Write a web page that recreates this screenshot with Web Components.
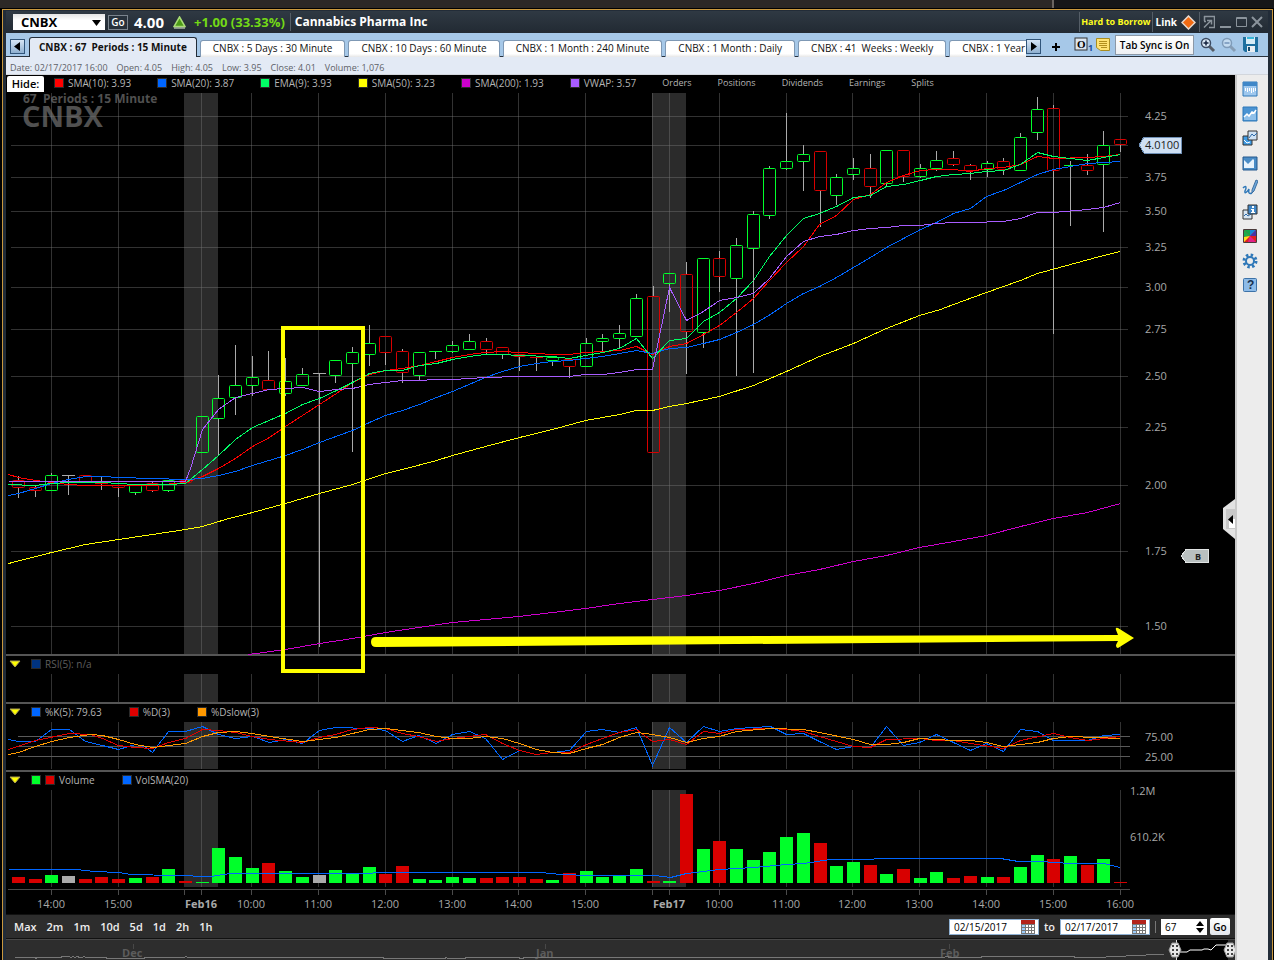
<!DOCTYPE html>
<html lang="en">
<head>
<meta charset="utf-8">
<title>CNBX 4.00 - Cannabics Pharma Inc</title>
<style>
  body {
    margin: 0;
    background: #000;
    font-family: "Open Sans", "Noto Sans", sans-serif;
    font-size: 11px;
  }
</style>
</head>
<body>
<trade-window>
  <title-bar slot="title" symbol="CNBX" price="4.00" change="+1.00 (33.33%)">Cannabics Pharma Inc</title-bar>
  <tab-strip slot="tabs">
    <chart-tab active>CNBX : 67&nbsp; Periods : 15 Minute</chart-tab>
    <chart-tab>CNBX : 5 Days : 30 Minute</chart-tab>
    <chart-tab>CNBX : 10 Days : 60 Minute</chart-tab>
    <chart-tab>CNBX : 1 Month : 240 Minute</chart-tab>
    <chart-tab>CNBX : 1 Month : Daily</chart-tab>
    <chart-tab>CNBX : 41&nbsp; Weeks : Weekly</chart-tab>
    <chart-tab>CNBX : 1 Year</chart-tab>
  </tab-strip>
  <info-bar slot="info">
    <span>Date: 02/17/2017 16:00</span>
    <span>Open: 4.05</span>
    <span>High: 4.05</span>
    <span>Low: 3.95</span>
    <span>Close: 4.01</span>
    <span>Volume: 1,076</span>
  </info-bar>
  <chart-area slot="chart">
    <chart-pane kind="price">
      <legend-item color="#f00">SMA(10): 3.93</legend-item>
      <legend-item color="#06f">SMA(20): 3.87</legend-item>
      <legend-item color="#00ff66">EMA(9): 3.93</legend-item>
      <legend-item color="#ff0">SMA(50): 3.23</legend-item>
      <legend-item color="#c0c">SMA(200): 1.93</legend-item>
      <legend-item color="#a85cff">VWAP: 3.57</legend-item>
      <legend-item>Orders</legend-item>
      <legend-item>Positions</legend-item>
      <legend-item>Dividends</legend-item>
      <legend-item>Earnings</legend-item>
      <legend-item>Splits</legend-item>
    </chart-pane>
    <chart-pane kind="rsi">
      <legend-item color="#003380" dim>RSI(5): n/a</legend-item>
    </chart-pane>
    <chart-pane kind="stochastic">
      <legend-item color="#06f">%K(5): 79.63</legend-item>
      <legend-item color="#d00">%D(3)</legend-item>
      <legend-item color="#f90">%Dslow(3)</legend-item>
    </chart-pane>
    <chart-pane kind="volume">
      <legend-item color="#00ff2a" color2="#d00">Volume</legend-item>
      <legend-item color="#06f">VolSMA(20)</legend-item>
    </chart-pane>
  </chart-area>
  <range-bar slot="range" from="02/15/2017" to="02/17/2017" periods="67"></range-bar>
  <range-overview slot="overview"></range-overview>
  <tool-rail slot="tools"></tool-rail>
</trade-window>

<script>
class TradeWindow extends HTMLElement {
  constructor() {
    super();
    this.attachShadow({mode: 'open'}).innerHTML = `
      <style>
        :host {
          display: block;
          background: #000;
        }
        .desktop {
          display: flex;
          height: 8px;
          background: #2c2826;
          border-bottom: 1px solid #000;
        }
        .desktop i {
          flex: none;
          width: 220px;
          margin-left: auto;
          background: #161618;
          border-left: 2px solid #6a6460;
        }
        .frame {
          border: solid #c9983e;
          border-width: 1px 1px 0;
          margin: 0 1px 0 2px;
        }
        .inner {
          border: solid #222c38;
          border-width: 1px 4px 0 3px;
        }
        .body {
          display: grid;
          grid-template-columns: minmax(0, 1fr) 33px;
        }
        .main {
          min-width: 0;
        }
      </style>
      <div class="desktop"><i></i></div>
      <div class="frame"><div class="inner">
        <slot name="title"></slot>
        <slot name="tabs"></slot>
        <slot name="info"></slot>
        <div class="body">
          <div class="main">
            <slot name="chart"></slot>
            <slot name="range"></slot>
            <slot name="overview"></slot>
          </div>
          <slot name="tools"></slot>
        </div>
      </div></div>
    `;
  }
}
customElements.define('trade-window', TradeWindow);

class TitleBar extends HTMLElement {
  constructor() {
    super();
    this.attachShadow({mode: 'open'}).innerHTML = `
      <style>
        :host {
          display: flex;
          align-items: center;
          height: 22px;
          padding: 0 4px 0 7px;
          color: #fff;
          font-weight: 700;
          font-size: 13px;
          white-space: nowrap;
          background: linear-gradient(#2f3943, #222a33);
        }
        .symbol {
          display: grid;
          width: 92px;
          height: 16px;
          background: linear-gradient(#e4e4e4, #fff 40%);
        }
        .symbol select, .symbol svg {
          grid-area: 1 / 1;
        }
        .symbol svg {
          justify-self: end;
          align-self: center;
          margin-right: 3px;
          pointer-events: none;
        }
        select {
          appearance: none;
          width: 100%;
          height: 16px;
          padding: 0 8px;
          border: 0;
          background: none;
          color: #000;
          font: inherit;
          line-height: 16px;
        }
        .go {
          width: 20px;
          height: 15px;
          margin: 0 6px 0 3px;
          padding: 0;
          border: 1px solid #7b848d;
          background: #27313b;
          color: #fff;
          font: 600 10px/12px "Open Sans", sans-serif;
        }
        .price {
          font-size: 15px;
        }
        .up {
          margin: 0 8px 0 9px;
        }
        .change {
          color: #73d916;
        }
        .name {
          margin-left: 5px;
          padding-left: 4px;
          border-left: 1px solid #555e67;
          font-size: 12px;
          line-height: 18px;
        }
        .right {
          display: flex;
          align-items: center;
          height: 100%;
          margin-left: auto;
        }
        .borrow {
          padding: 0 1px;
          border: solid #555e67;
          border-width: 0 1px;
          color: #ffff1e;
          font-size: 9px;
          line-height: 20px;
        }
        .link {
          margin: 0 4px 0 3px;
          font-size: 10px;
        }
        .frame-icons {
          display: flex;
          gap: 3px;
          margin-left: 3px;
          padding-left: 3px;
          border-left: 1px solid #555e67;
        }
        .frame-icons button {
          width: 13px;
          height: 20px;
          padding: 0;
          border: 0;
          background: none;
        }
        svg {
          display: block;
        }
      </style>
      <label class="symbol">
        <select aria-label="Symbol"><option></option></select>
        <svg width="10" height="7"><path d="M0 1h9L4.500 7z"/></svg>
      </label>
      <button class="go">Go</button>
      <span class="price"></span>
      <svg class="up" width="13" height="13" viewBox="0 0 13 13">
        <path d="M6.500 1 12 10.500H1z" fill="#4c9a17" stroke="#a9dd75" stroke-width="1.500"/>
        <path d="M1 12h11" stroke="#e6f5d6"/>
      </svg>
      <span class="change"></span>
      <span class="name"><slot></slot></span>
      <div class="right">
        <span class="borrow">Hard to Borrow</span>
        <span class="link">Link</span>
        <svg width="15" height="15" viewBox="0 0 15 15">
          <path d="M7.500 1 14 7.500 7.500 14 1 7.500z" fill="#f26a12" stroke="#e9d9cd" stroke-width="1.500"/>
        </svg>
        <div class="frame-icons">
          <button aria-label="Pop out"><svg width="12" height="20" fill="none" stroke="#8b949c"><path d="M1 4.500h10.500v11H6M1.500 4v5M1 9.500h2M1 15.500l7-7M4 8.500h4.500v4" stroke-width="1.500"/></svg></button>
          <button aria-label="Minimize"><svg width="12" height="20"><path d="M1 14h11v2H1z" fill="#8b949c"/></svg></button>
          <button aria-label="Maximize"><svg width="12" height="20" fill="none" stroke="#8b949c"><path d="M1.500 5.500h10v9h-10zM1 6.500h11"/></svg></button>
          <button aria-label="Close"><svg width="12" height="20" fill="none" stroke="#8b949c" stroke-width="2"><path d="M1 5l10 10M11 5L1 15"/></svg></button>
        </div>
      </div>
    `;
  }

  connectedCallback() {
    this.shadowRoot.querySelector('option').textContent = this.getAttribute('symbol');
    this.shadowRoot.querySelector('.price').textContent = this.getAttribute('price');
    this.shadowRoot.querySelector('.change').textContent = this.getAttribute('change');
  }
}
customElements.define('title-bar', TitleBar);

class ChartTab extends HTMLElement {
  constructor() {
    super();
    this.attachShadow({mode: 'open'}).innerHTML = `
      <style>
        :host {
          display: block;
          flex: none;
        }
        button {
          display: block;
          height: 17px;
          padding: 0 12px;
          border: 1px solid #7e98b4;
          border-bottom: 0;
          border-radius: 3px 3px 0 0;
          background: linear-gradient(#fff 80%, #e6e6e6);
          color: #111;
          font: inherit;
          line-height: 15px;
          white-space: nowrap;
        }
        :host([active]) button {
          height: 20px;
          padding: 0 9px;
          border-color: #222c38;
          background: #e3eaf5;
          font-weight: 700;
          line-height: 19px;
        }
      </style>
      <button role="tab"><slot></slot></button>
    `;
  }
}
customElements.define('chart-tab', ChartTab);

class TabStrip extends HTMLElement {
  constructor() {
    super();
    this.attachShadow({mode: 'open'}).innerHTML = `
      <style>
        :host {
          display: flex;
          align-items: center;
          box-sizing: border-box;
          height: 24px;
          padding: 0 9px 0 4px;
          background: #a6c8e8;
          border-bottom: 1px solid #29323c;
          font-size: 10px;
        }
        .tabs {
          display: flex;
          flex: 1;
          align-items: flex-end;
          gap: 3px;
          height: 24px;
          margin-left: 4px;
          overflow: hidden;
          min-width: 0;
        }
        button {
          flex: none;
          padding: 0;
          border: 0;
          background: none;
        }
        .scroll {
          width: 15px;
          height: 15px;
          margin-top: 4px;
          border: 1px solid #31557a;
          background: linear-gradient(#d7e6f5, #8fb0d0);
        }
        .add {
          margin: 4px 13px 0 10px;
        }
        .sync {
          box-sizing: border-box;
          width: 79px;
          height: 20px;
          margin: 0 6px 0 5px;
          border: 1px solid #8c98a6;
          background: linear-gradient(#fff, #eef0f3);
          color: #000;
          font: inherit;
          font-weight: 600;
          white-space: nowrap;
        }
        .zoom {
          margin-right: 5px;
        }
        svg {
          display: block;
        }
      </style>
      <button class="scroll" aria-label="Previous tabs"><svg width="13" height="13"><path d="M9 2v9L3 6.500z"/></svg></button>
      <div class="tabs" role="tablist"><slot></slot></div>
      <button class="scroll" aria-label="Next tabs"><svg width="13" height="13"><path d="M4 2v9l6-4.500z"/></svg></button>
      <button class="add" aria-label="Add tab"><svg width="10" height="10"><path d="M4 1h2v3h3v2H6v3H4V6H1V4h3z"/></svg></button>
      <button aria-label="Open orders">
        <svg width="22" height="16" font-family="Liberation Serif" font-weight="700">
          <rect x="1" y="1" width="12" height="12" fill="#dce6f0" stroke="#333"/>
          <text x="3" y="11" font-size="11">O</text>
          <text x="14" y="14" font-size="9" font-family="Open Sans" fill="#1d4f9c">1</text>
        </svg>
      </button>
      <button aria-label="Notes">
        <svg width="14" height="15">
          <path d="M.5 1.500h13v12h-9l-4-3z" fill="#ffe373" stroke="#a98d1f"/>
          <path d="M3 4.500h8M3 6.500h8M3 8.500h8M5 10.500h6" stroke="#b28f1c"/>
        </svg>
      </button>
      <button class="sync">Tab Sync is On</button>
      <button class="zoom" aria-label="Zoom in">
        <svg width="16" height="16" fill="none">
          <path d="M9 9l5 5" stroke="#555c66" stroke-width="3"/>
          <circle cx="6" cy="6" r="4.500" fill="#dcebf8" stroke="#3b4b63" stroke-width="1.500"/>
          <path d="M3.500 6h5M6 3.500v5" stroke="#14233f" stroke-width="1.500"/>
        </svg>
      </button>
      <button class="zoom" aria-label="Zoom out">
        <svg width="16" height="16" fill="none" opacity=".55">
          <path d="M9 9l5 5" stroke="#6d7b8d" stroke-width="3"/>
          <circle cx="6" cy="6" r="4.500" fill="#dcebf8" stroke="#5f7893" stroke-width="1.500"/>
          <path d="M3.500 6h5" stroke="#4a6a94" stroke-width="1.500"/>
        </svg>
      </button>
      <button aria-label="Save">
        <svg width="17" height="17">
          <path d="M1 1h15v15H3l-2-2z" fill="#1d6f9f"/>
          <path d="M4 1h9v7H4z" fill="#d7ecf6"/>
          <path d="M5 10h8v6H5z" fill="#e9eef2"/>
          <path d="M6 11h2v4H6z" fill="#174c6e"/>
          <path d="M5 1h7v2H5z" fill="#38b6d8"/>
        </svg>
      </button>
    `;
  }
}
customElements.define('tab-strip', TabStrip);

class InfoBar extends HTMLElement {
  constructor() {
    super();
    this.attachShadow({mode: 'open'}).innerHTML = `
      <style>
        :host {
          display: flex;
          gap: 9px;
          box-sizing: border-box;
          height: 18px;
          padding: 2px 4px 0;
          background: #e3eaf5;
          border-bottom: 1px solid #d2d6dc;
          color: #5d6167;
          font: 9px/17px "Open Sans", sans-serif;
          white-space: nowrap;
        }
      </style>
      <slot></slot>
    `;
  }
}
customElements.define('info-bar', InfoBar);

class LegendItem extends HTMLElement {
  constructor() {
    super();
    this.attachShadow({mode: 'open'}).innerHTML = `
      <style>
        :host {
          display: flex;
          align-items: center;
          gap: 4px;
          color: #b4b4b4;
          font-size: 9px;
          line-height: 16px;
          white-space: nowrap;
        }
        :host([color]) {
          font-size: 10px;
        }
        :host([dim]) {
          color: #5e5e5e;
        }
        i {
          box-sizing: border-box;
          width: 10px;
          height: 10px;
          border: 1px solid #2a2a2a;
        }
      </style>
      <slot></slot>
    `;
  }

  connectedCallback() {
    const slot = this.shadowRoot.querySelector('slot');
    ['color', 'color2'].forEach((name) => {
      if (!this.hasAttribute(name)) return;
      const swatch = document.createElement('i');
      swatch.style.background = this.getAttribute(name);
      slot.before(swatch);
    });
  }
}
customElements.define('legend-item', LegendItem);

// drawing data, all panes share one coordinate space
const HOURS = [51, 118, 201, 251, 318, 385, 452, 518, 585, 669, 719, 786, 852, 919, 986, 1053, 1120];
const HOUR_LABELS = ['14:00', '15:00', 'Feb16', '10:00', '11:00', '12:00', '13:00', '14:00', '15:00',
  'Feb17', '10:00', '11:00', '12:00', '13:00', '14:00', '15:00', '16:00'];
const PRICES = [[116, '4.25'], [145, ''], [177, '3.75'], [211, '3.50'], [247, '3.25'], [287, '3.00'],
  [329, '2.75'], [376, '2.50'], [427, '2.25'], [485, '2.00'], [551, '1.75'], [626, '1.50']];
const COLORS = {g: '#00ff2a', r: '#d80000', w: '#aaa'};

// direction, high, body top, body bottom, low
const CANDLES = [
  'r 476 480 487 498', 'r 485 487 490 497', 'g 473 475 490 490', 'w 475 475 475 495', 'r 475 475 481 481',
  'r 476 483 483 490', 'r 485 485 487 497', 'g 485 485 492 495', 'r 482 483 490 492', 'g 480 480 490 492',
  'r 480 480 482 482', 'g 416 416 452 452', 'g 375 398 418 456', 'g 345 385 397 415', 'g 356 377 385 396',
  'r 351 380 389 389', 'g 358 381 393 396', 'g 368 374 385 385', 'w 373 373 373 647', 'g 360 360 375 383',
  'g 347 352 363 452', 'g 325 343 354 366', 'r 336 336 352 365', 'r 349 351 372 383', 'g 352 352 375 380',
  'g 351 351 351 359', 'g 341 345 351 353', 'g 334 341 349 349', 'r 338 341 349 354', 'r 347 347 354 359',
  'r 354 354 356 371', 'r 357 357 357 371', 'g 356 357 360 366', 'r 359 359 366 378', 'g 338 343 366 366',
  'g 334 338 341 351', 'g 325 333 338 348', 'g 294 298 336 336', 'r 286 296 452 452', 'g 273 273 283 312',
  'r 262 274 331 374', 'g 258 258 332 348', 'r 251 258 276 292', 'g 238 245 278 376', 'g 211 214 248 373',
  'g 166 168 215 219', 'g 113 161 168 170', 'g 145 154 161 191', 'r 151 151 190 227', 'g 174 177 195 205',
  'g 158 168 174 180', 'r 154 168 186 198', 'g 150 150 183 186', 'r 150 150 176 182', 'g 164 168 176 178',
  'g 151 160 168 171', 'r 151 158 164 166', 'r 164 165 170 180', 'g 161 163 169 177', 'r 158 161 169 175',
  'g 133 137 170 170', 'g 97 109 132 140', 'r 105 108 170 334', 'g 161 165 165 226', 'r 154 165 170 175',
  'g 131 145 164 232', 'r 139 139 144 152'
];

const AVERAGES = {
  '#f00': '8,474 18,477 35,480 51,482 68,484 85,485 152,485 185,482 202,476 218,468 235,458 252,446 269,437 285,426 302,415 319,404 336,393 352,382 369,374 385,370 402,368 419,365 436,361 452,357 469,354 485,352 502,351 519,352 536,353 552,354 569,354 585,352 602,351 619,350 636,346 652,354 669,346 686,343 703,334 719,325 736,312 753,298 769,280 786,262 803,246 819,224 836,215 853,199 870,194 886,182 903,175 920,170 936,169 953,169 970,171 986,168 1003,167 1020,164 1037,156 1053,158 1087,157 1103,156 1120,154',
  '#06f': '8,495 18,493 35,488 51,483 68,479 85,476 102,476 118,477 152,478 185,479 202,478 218,475 235,471 252,465 285,455 302,449 319,442 352,430 369,422 385,415 402,410 419,404 436,397 452,391 485,377 502,371 519,366 536,363 552,361 569,360 585,358 602,356 619,353 636,350 652,353 669,348 686,347 703,343 719,339 736,332 753,324 770,314 786,303 803,293 819,286 836,277 853,267 870,257 886,247 903,238 920,229 936,222 953,213 970,208 986,196 1003,190 1020,182 1037,174 1053,169 1070,166 1087,163 1120,161',
  '#00ff66': '8,484 35,485 51,483 68,482 102,482 118,483 135,484 169,484 185,483 202,469 218,455 235,439 252,427 285,413 302,404 319,398 336,390 352,382 369,373 385,370 402,370 419,365 436,363 452,359 469,356 485,354 502,354 519,355 552,356 569,358 585,355 602,352 619,348 636,338 652,358 669,340 686,338 703,321 719,312 736,298 753,280 769,256 786,235 803,218 819,213 836,206 853,197 870,195 886,186 903,184 920,180 936,176 953,174 970,173 986,171 1003,170 1020,164 1037,152 1053,156 1070,158 1087,160 1103,157 1120,154',
  '#a85cff': '8,481 185,481 190,468 202,429 218,409 235,397 252,393 269,389 285,388 302,387 319,391 336,389 352,388 369,384 385,382 402,380 452,379 485,377 519,376 569,376 585,374 602,374 619,372 636,369 652,369 669,287 686,320 703,311 719,300 736,297 753,293 769,278 786,256 803,241 819,236 836,234 853,230 870,228 886,227 903,225 920,225 936,223 953,222 970,222 1003,221 1020,218 1037,212 1053,212 1087,209 1103,207 1120,202',
  '#ff0': '8,563 51,552 85,544 118,539 152,534 185,529 202,526 225,519 252,512 285,503 319,493 352,484 385,473 402,469 436,460 452,455 485,446 519,437 552,429 585,420 619,414 636,410 652,410 669,406 686,403 719,396 753,385 786,371 819,356 853,343 886,328 919,315 940,309 953,304 986,292 1020,280 1037,273 1070,264 1103,255 1120,251',
  '#c0c': '248,654 285,649 319,643 352,638 385,632 418,627 452,622 485,619 518,616 552,612 585,608 619,603 652,599 686,595 719,590 753,583 786,575 819,569 853,561 886,555 919,547 953,541 986,535 1020,526 1053,518 1087,512 1120,503'
};

const STOCHASTIC = {
  '#06f': '8,739 18,741 35,741 51,729 69,729 85,741 102,745 118,749 135,744 144,746 152,752 168,731 185,731 202,726 218,734 235,738 252,736 269,742 285,739 302,743 319,730 335,727 369,728 385,730 402,741 418,735 436,743 452,734 469,731 485,738 502,759 519,750 536,754 552,752 569,750 586,731 602,729 619,732 636,727 652,765 669,727 686,742 703,726 719,731 736,728 753,727 770,726 786,734 803,733 819,741 836,749 853,746 870,747 886,726 903,745 919,742 936,734 953,742 970,750 986,743 1003,751 1020,729 1037,731 1053,740 1087,740 1103,735 1120,734',
  '#e00000': '8,749 35,740 69,733 90,734 102,738 118,745 135,747 152,748 168,742 185,738 202,729 218,730 235,732 252,736 269,739 302,742 319,737 335,734 352,729 369,727 385,728 402,733 418,736 436,741 452,738 469,736 485,734 502,743 519,750 536,754 552,752 569,752 586,744 602,738 619,732 636,729 652,741 669,739 686,744 703,731 719,733 736,729 770,728 786,729 803,731 819,736 836,741 853,746 870,747 886,739 919,738 936,740 953,740 970,743 1003,748 1020,740 1053,733 1070,737 1087,740 1120,736',
  '#f90': '8,754 18,752 35,746 51,741 69,737 90,734 102,735 118,739 135,744 152,747 185,743 202,736 218,732 235,731 252,733 269,736 302,741 319,739 335,737 352,733 369,729 385,728 418,732 436,736 452,738 469,738 485,736 502,738 519,743 536,749 552,752 569,753 586,748 602,744 619,737 636,732 652,734 669,737 686,742 703,738 719,736 736,731 770,728 803,729 819,732 853,739 870,744 886,744 903,742 919,738 953,740 970,740 986,742 1003,746 1020,744 1037,742 1053,738 1070,736 1120,738'
};

// direction and bar top
const VOLUMES = `r877 r879 g875 w876 r879 r877 r879 g878 r877 g869 r881 g882 g848 g857 g868 r863
  g871 g877 w875 g870 g873 g867 r874 r866 g879 g880 g877 g878 r878 r877 r877 r879
  g880 r873 g871 g877 g876 g869 r881 g881 r794 g849 r841 g849 g860 g852 g837 g833
  r843 g866 g862 r865 g874 r869 g878 g872 r878 r876 g877 r877 g867 g855 r859 g856
  r865 g859 r882`.split(/\s+/);
const VOLUME_SMA = '8,869 76,869 94,871 118,872 130,874 175,875 210,876 230,873 360,873 385,872 540,872 560,874 590,875 655,875 670,877 686,873 719,869 753,867 786,864 803,863 830,859 862,859 886,858 1000,858 1018,861 1040,861 1070,863 1103,863 1120,867';

const centre = (i) => Math.floor(18.45 + 16.7 * i) + 0.5;

const lines = (set) => Object.entries(set).map(([color, points]) =>
  `<polyline points="${points}" stroke="${color}" transform="translate(.5 .5)"/>`).join('');

const grid = (top, bottom) => `
  <path d="M184 ${top}h34V${bottom}h-34zM652 ${top}h34V${bottom}h-34z" fill="#2b2b2b" stroke="none"/>
  <path d="${HOURS.concat(652).map((x) => `M${x}.5 ${top}V${bottom}`).join('')}" stroke="#777" stroke-opacity=".42"/>`;

const label = (x, y, text, extra = '') => `<text x="${x}" y="${y}" ${extra}>${text}</text>`;

const PANES = {
  price: {
    top: 93,
    bottom: 654,
    draw() {
      const candles = CANDLES.map((row, i) => {
        const [dir, high, top, bottom, low] = row.split(' ');
        const x = centre(i);
        const body = top === bottom
          ? `<path d="M${x - 6.5} ${top}.5h13" stroke="${COLORS[dir]}"/>`
          : `<rect x="${x - 6}" y="${top}.5" width="12" height="${bottom - top}" rx="1" stroke="${COLORS[dir]}" shape-rendering="auto"/>`;
        return `<path d="M${x} ${high}V${top}M${x} ${bottom}V${low}" stroke="#aaa"/>${body}`;
      });
      return `
        ${label(23, 103, '67&#160; Periods : 15 Minute', 'class="mark" font-size="12"')}
        ${label(22, 127, 'CNBX', 'class="mark" font-size="29"')}
        ${grid(93, 654)}
        <path d="${PRICES.map(([y]) => `M11 ${y}.5H1128`).join('')}" stroke="#777" stroke-opacity=".42"/>
        ${candles.join('')}
        ${lines(AVERAGES)}
        ${PRICES.map(([y, text]) => label(1145, y + 4, text)).join('')}
        <path d="M1139 145l5-8h37v16h-37z" fill="#cfe0f4" stroke="#6f8fb5"/>
        ${label(1145, 149, '4.0100', 'class="tag"')}
        <path d="M1181 556l5-6.500h22v13h-22z" fill="#b9c0c0" stroke="#e1e4e4"/>
        ${label(1195, 560, 'B', 'class="tag" font-size="9" font-weight="700"')}`;
    }
  },
  rsi: {
    top: 674,
    bottom: 702,
    draw: () => grid(674, 702)
  },
  stochastic: {
    top: 722,
    bottom: 770,
    draw: () => `
      ${grid(722, 769)}
      <path d="M18 736.500H1130M18 746.500H1130M18 756.500H1130" stroke="#5a5a5a"/>
      ${lines(STOCHASTIC)}
      ${label(1145, 741, '75.00')}
      ${label(1145, 761, '25.00')}`
  },
  volume: {
    top: 790,
    bottom: 914,
    draw() {
      const bars = VOLUMES.map((bar, i) =>
        `<path d="M${centre(i) - 6.5} ${bar.slice(1)}h13V883h-13z" fill="${COLORS[bar[0]]}" stroke="none"/>`);
      return `
        ${grid(790, 887)}
        <path d="M8 889.500H1130${HOURS.concat(184, 652).map((x) => `M${x}.5 890v5`).join('')}" stroke="#4a4a4a"/>
        ${bars.join('')}
        <polyline points="${VOLUME_SMA}" stroke="#06f" transform="translate(.5 .5)"/>
        ${label(1130, 795, '1.2M')}
        ${label(1130, 841, '610.2K')}
        ${HOURS.map((x, i) => label(x, 908, HOUR_LABELS[i],
          `text-anchor="middle"${HOUR_LABELS[i].startsWith('Feb') ? ' font-weight="700"' : ''}`)).join('')}`;
    }
  }
};

class ChartPane extends HTMLElement {
  constructor() {
    super();
    this.attachShadow({mode: 'open'});
  }

  connectedCallback() {
    const kind = this.getAttribute('kind');
    const pane = PANES[kind];
    const control = kind === 'price'
      ? '<button class="hide">Hide:</button>'
      : '<button class="fold" aria-label="Collapse"><svg width="12" height="8"><path d="M1 1h10L6 7z" fill="#ff0" stroke="#a89c55"/></svg></button>';
    this.shadowRoot.innerHTML = `
      <style>
        :host {
          display: block;
          border-top: 2px solid #555;
        }
        :host([kind="price"]) {
          border-top: 0;
        }
        .legend {
          display: flex;
          align-items: center;
          gap: 27px;
          box-sizing: border-box;
          height: 18px;
          padding: 0 0 2px 3px;
        }
        .price {
          gap: 26px;
          padding-left: 1px;
        }
        button {
          flex: none;
          padding: 0;
          border: 0;
          background: none;
        }
        .hide {
          width: 37px;
          height: 16px;
          margin: 2px -16px 0 0;
          border-radius: 2px 2px 0 0;
          background: #fff;
          color: #000;
          font: 600 11px/16px "Open Sans", sans-serif;
        }
        .fold {
          width: 12px;
          margin-right: -17px;
        }
        .fold svg {
          display: block;
        }
        .plot {
          display: block;
          width: 100%;
          overflow: visible;
          fill: none;
          font-size: 11px;
          shape-rendering: crispEdges;
        }
        text {
          fill: #a8a8a8;
        }
        .mark {
          fill: #505050;
          font-weight: 700;
        }
        .tag {
          fill: #222;
        }
      </style>
      <div class="legend ${kind}">${control}<slot></slot></div>
      <svg class="plot" viewBox="6 ${pane.top} 1229 ${pane.bottom - pane.top}">${pane.draw()}</svg>
    `;
  }
}
customElements.define('chart-pane', ChartPane);

class ChartArea extends HTMLElement {
  constructor() {
    super();
    this.attachShadow({mode: 'open'}).innerHTML = `
      <style>
        :host {
          display: block;
          position: relative;
          background: #000;
        }
        .notes {
          position: absolute;
          top: 0;
          left: 0;
          width: 100%;
          pointer-events: none;
        }
        .drawer {
          position: absolute;
          top: 50%;
          right: 0;
          padding: 0;
          border: 0;
          background: none;
        }
        .drawer svg {
          display: block;
        }
      </style>
      <slot></slot>
      <svg class="notes" viewBox="6 75 1229 839">
        <rect x="283" y="328" width="80" height="343" fill="none" stroke="#ff0" stroke-width="4"/>
        <path d="M376 637 1118 635 1116 630Q1115 627 1118 628L1134 638 1118 648Q1116 648 1116 645L1118 641 376 647Q371 647 371 642 371 637 376 637z" fill="#ff0"/>
      </svg>
      <button class="drawer" aria-label="Open panel">
        <svg width="12" height="48"><path d="M12 4v40L0 34V13z" fill="#e2e2e2"/><path d="M3 14h9v20H3z" fill="#c8c8c8"/><path d="M6 24h6v9H6z" fill="#fff"/><path d="M10 20v9l-5-4.500z"/></svg>
      </button>
    `;
  }
}
customElements.define('chart-area', ChartArea);

class RangeBar extends HTMLElement {
  constructor() {
    super();
    const calendar = `
      <svg width="14" height="14">
        <path d="M0 0h14v14H0z" fill="#777"/><path d="M0 0h14v4H0z" fill="#b3231b"/>
        <path d="M5 5h2v2H5zM8 5h2v2H8zM11 5h2v2h-2zM5 8h2v2H5zM8 8h2v2H8zM11 8h2v2h-2zM5 11h2v2H5zM8 11h2v2H8zM11 11h2v2h-2z" fill="#fff"/>
        <path d="M1 5h3v2H1zM1 8h3v2H1zM1 11h3v2H1z" fill="#9ccdfb"/>
      </svg>`;
    this.attachShadow({mode: 'open'}).innerHTML = `
      <style>
        :host {
          display: flex;
          align-items: center;
          box-sizing: border-box;
          height: 25px;
          padding: 0 5px 0 8px;
          border: solid #111;
          border-width: 1px 0;
          background: #2d2d2d;
          color: #eee;
          font-size: 11px;
          font-weight: 600;
        }
        .spans {
          display: flex;
          gap: 10px;
          margin-right: auto;
        }
        button {
          padding: 0;
          border: 0;
          background: none;
          color: inherit;
          font: inherit;
        }
        .field {
          display: flex;
          align-items: center;
          box-sizing: border-box;
          width: 90px;
          height: 16px;
          padding-right: 3px;
          border: 1px solid #8fb1d3;
          background: #fff;
        }
        input {
          flex: 1;
          min-width: 0;
          height: 14px;
          padding: 0 0 0 4px;
          border: 0;
          background: none;
          color: #000;
          font: 400 10px/14px "Open Sans", sans-serif;
          appearance: textfield;
        }
        .to {
          margin: 0 5px;
        }
        .count {
          width: 46px;
          margin: 0 3px 0 5px;
          border: 0;
        }
        .rule {
          width: 1px;
          height: 12px;
          margin-left: 5px;
          background: #777;
        }
        .go {
          width: 20px;
          height: 17px;
          border-radius: 2px;
          background: linear-gradient(#fff, #e2e6ec);
          color: #000;
          font-size: 10px;
        }
      </style>
      <div class="spans">
        <button>Max</button><button>2m</button><button>1m</button><button>10d</button>
        <button>5d</button><button>1d</button><button>2h</button><button>1h</button>
      </div>
      <label class="field"><input id="from" aria-label="From date">${calendar}</label>
      <span class="to">to</span>
      <label class="field"><input id="to" aria-label="To date">${calendar}</label>
      <span class="rule"></span>
      <label class="field count">
        <input id="periods" type="number" aria-label="Periods">
        <svg width="8" height="14"><path d="M4 1l4 5H0zM4 13l4-5H0z"/></svg>
      </label>
      <button class="go">Go</button>
    `;
  }

  connectedCallback() {
    ['from', 'to', 'periods'].forEach((id) => {
      this.shadowRoot.getElementById(id).value = this.getAttribute(id);
    });
  }
}
customElements.define('range-bar', RangeBar);

class RangeOverview extends HTMLElement {
  constructor() {
    super();
    const grip = (x) => `
      <path d="M${x - 6} 10l3-7h6l3 7-3 7h-6z" fill="#e8e8e8" stroke="#999"/>
      <path d="M${x - 2} 5v10M${x + 2} 5v10" stroke="#444" stroke-width="2" stroke-dasharray="2 2"/>`;
    this.attachShadow({mode: 'open'}).innerHTML = `
      <style>
        :host {
          display: block;
          background: #2d2d2d;
          border-top: 1px solid #484848;
          box-sizing: border-box;
          height: 21px;
          overflow: hidden;
        }
        svg {
          display: block;
          width: 100%;
        }
      </style>
      <svg viewBox="6 0 1229 20" fill="none" font-size="11" font-weight="700">
        <path d="M133.500 4v5M545.500 4v5M949.500 4v5" stroke="#484848"/>
        <text x="122" y="17" fill="#5c5c5c">Dec</text>
        <text x="536" y="17" fill="#5c5c5c">Jan</text>
        <text x="940" y="17" fill="#5c5c5c">Feb</text>
        <path d="M15 17.500h20l1 1 1-1h24v-1h8l2 1 2-1 2 1 2-1 3 1h2l2-1 2 1h20l1 1h37v-1h40l2-1 2 1h195v1h62l1-1 2 1h17v-1h54v1h4v-1h420l4-1 3 1h30l3-1h90l3 1h20l20-1 20-1 20-1h8" stroke="#777" shape-rendering="crispEdges"/>
        <path d="M1176 0h52v20h-52z" fill="#000"/>
        <path d="M1176.500 0v20" stroke="#ddd"/>
        <path d="M1180 12h7l3-2h12l2-1h4l3 1 5-5h14" stroke="#fff"/>
        ${grip(1175)}${grip(1230)}
      </svg>
    `;
  }
}
customElements.define('range-overview', RangeOverview);

class ToolRail extends HTMLElement {
  constructor() {
    super();
    const tools = [
      ['Header bar', '<path d="M1 1h14v14H1z" fill="#9fc8ee" stroke="#2f78b8"/><path d="M1 1h14v4H1z" fill="#3f87c8"/><path d="M3.500 7v3M5.500 7v4M7.500 7v3M9.500 7v5M11.500 7v4M13.500 7v3" stroke="#fff"/>'],
      ['Chart', '<path d="M1 1h14v14H1z" fill="#4a93d2" stroke="#2f78b8"/><path d="M2 11l3-3 2 2 3-4 2 1 2-3v10H2z" fill="#8fc0ea"/><path d="M2 11l3-3 2 2 3-4 2 1 2-3" stroke="#fff" stroke-width="1.500" fill="none"/>'],
      ['Compare', '<path d="M1 6h9v9H1z" fill="#3f9be4" stroke="#333"/><path d="M6 1h9v9H6z" fill="#cfe2f4" stroke="#333"/><path d="M7 8l3-4 2 2 3-3" stroke="#2d6aa8" fill="none"/><path d="M2 10l3 3 3-1" stroke="#fff" fill="none"/>'],
      ['Studies', '<path d="M1 2h14v13H1z" fill="#4a8cc6" stroke="#24598d"/><path d="M2 5l4 4 5-5 1 1v8H2z" fill="#e8f3fc"/>'],
      ['Draw', '<path d="M1 9c3-3 4-1 2 3-1 4 3 0 4-2-1 5 1 5 3 4" stroke="#2f78b8" stroke-width="1.500" fill="none"/><path d="M14 1l2 1-4 10-2 2v-3z" fill="#6fa9dd" stroke="#3f6f9f"/>'],
      ['Chart info', '<path d="M1 6h9v9H1z" fill="#d8e6f3" stroke="#333"/><path d="M2 12l2-2 2 2 3-2" stroke="#2d6aa8" fill="none"/><path d="M6 1h9v9H6z" fill="#3f87c8" stroke="#333"/><path d="M10 2h2v2h-2zM9 5h3v3h1v1H9V8h1V6H9z" fill="#fff"/>'],
      ['Colors', '<path d="M2 2h12v12H2z" fill="#e02020"/><path d="M2 2h6v6z" fill="#13a94b"/><path d="M2 2l6 6-6 1z" fill="#18b04c"/><path d="M8 2h6L8 8z" fill="#1587d8"/><path d="M14 2v6H8z" fill="#4534a8"/><path d="M2 9l6-1-6 6z" fill="#ffe21b"/><path d="M8 8l-2 6h8z" fill="#e0218a"/><path d="M1.500 1.500h13v13h-13z" fill="none" stroke="#4a3a3a"/>'],
      ['Settings', '<circle cx="8" cy="8" r="6" fill="none" stroke="#2f78b8" stroke-width="3" stroke-dasharray="2.400 2.300"/><circle cx="8" cy="8" r="4" fill="#ececec" stroke="#2f78b8" stroke-width="2"/>'],
      ['Help', '<rect x="1.500" y="1.500" width="13" height="13" rx="1" fill="#8dbbe8" stroke="#3c72a8"/><text x="5" y="12" font-size="12" font-weight="700" fill="#16304f">?</text>']
    ];
    this.attachShadow({mode: 'open'}).innerHTML = `
      <style>
        :host {
          display: block;
          box-sizing: border-box;
          padding-top: 6px;
          border-left: 2px solid #c9c9c9;
          background: #ececec;
        }
        nav {
          display: flex;
          flex-direction: column;
          align-items: center;
          justify-content: space-between;
          height: 212px;
          padding-right: 5px;
        }
        button {
          padding: 0;
          border: 0;
          background: none;
        }
        svg {
          display: block;
        }
      </style>
      <nav>
        ${tools.map(([name, art]) => `<button aria-label="${name}"><svg width="16" height="16">${art}</svg></button>`).join('')}
      </nav>
    `;
  }
}
customElements.define('tool-rail', ToolRail);
</script>
</body>
</html>
